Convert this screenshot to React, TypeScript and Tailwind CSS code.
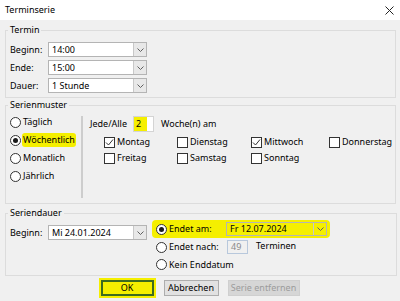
import React from "react";

const YELLOW = "bg-[#f5ef00]";

function Chevron() {
  return (
    <svg width="7" height="4" viewBox="0 0 7 4" fill="none">
      <path d="M0.5 0.5 L3.5 3.5 L6.5 0.5" stroke="#606060" strokeWidth="1" />
    </svg>
  );
}

function Combo({ value, w, yellow }: { value: string; w: string; yellow?: boolean }) {
  return (
    <div className={`flex h-full ${w} border border-[#b4b4b4] ${yellow ? YELLOW : "bg-white"}`}>
      <div className="flex-1 flex items-center pl-[3px] overflow-hidden whitespace-nowrap">{value}</div>
      <div className={`w-[13px] flex items-center justify-center border-l border-[#c8c8c8] ${yellow ? YELLOW : "bg-[#e8e8e8]"}`}>
        <Chevron />
      </div>
    </div>
  );
}

function Radio({ checked }: { checked?: boolean }) {
  return (
    <span className="w-[11px] h-[11px] rounded-full border border-[#333333] bg-white flex items-center justify-center shrink-0">
      {checked && <span className="w-[5px] h-[5px] rounded-full bg-[#1a1a1a]" />}
    </span>
  );
}

function Check({ label, checked }: { label: string; checked?: boolean }) {
  return (
    <div className="flex items-center gap-[2px]">
      <span className="w-[11px] h-[11px] border border-[#333333] bg-white flex items-center justify-center shrink-0">
        {checked && (
          <svg width="9" height="9" viewBox="0 0 9 9" fill="none">
            <path d="M1 4.5 L3.5 7 L8 1.5" stroke="#333333" strokeWidth="1" />
          </svg>
        )}
      </span>
      <span>{label}</span>
    </div>
  );
}

export default function App() {
  return (
    <div className="w-[400px] h-[301px] bg-[#f0f0f0] flex flex-col text-[9px] leading-[12px] text-black font-['Noto_Sans',sans-serif] overflow-hidden">
      {/* Title bar */}
      <div className="h-[20px] bg-white flex items-center justify-between pl-[5px] pr-[6px]">
        <span>Terminserie</span>
        <svg width="9" height="9" viewBox="0 0 9 9" fill="none">
          <path d="M0.5 0.5 L8.5 8.5 M8.5 0.5 L0.5 8.5" stroke="#222" strokeWidth="1" />
        </svg>
      </div>

      {/* Termin */}
      <fieldset className="mt-[4px] ml-[5px] mr-[4px] border border-[#dcdcdc] pl-[2px]">
        <legend className="px-[2px]">Termin</legend>
        <div className="flex flex-col gap-[3px] pt-[6px] pb-[4px] pl-[2px]">
          {[
            ["Beginn:", "14:00"],
            ["Ende:", "15:00"],
            ["Dauer:", "1 Stunde"],
          ].map(([l, v]) => (
            <div key={l} className="h-[15px] flex items-center">
              <span className="w-[38px]">{l}</span>
              <Combo value={v} w="w-[99px]" />
            </div>
          ))}
        </div>
      </fieldset>

      {/* Serienmuster */}
      <fieldset className="mt-[1px] ml-[5px] mr-[4px] border border-[#dcdcdc] pl-[2px]">
        <legend className="px-[2px]">Serienmuster</legend>
        <div className="h-[92px] flex">
          <div className="w-[73px] pt-[2px] pl-[2px] flex flex-col">
            {[
              ["Täglich", false],
              ["Wöchentlich", true],
              ["Monatlich", false],
              ["Jährlich", false],
            ].map(([l, c]) => (
              <div key={l as string} className="h-[18px] flex items-center gap-[1px]">
                <Radio checked={c as boolean} />
                <span className={c ? `${YELLOW} rounded-[3px] px-[1px] py-[1px]` : "px-[1px]"}>{l as string}</span>
              </div>
            ))}
          </div>
          <div className="w-[2px] my-[5px] bg-[#cdcdcd]" />
          <div className="flex-1 pl-[7px] flex flex-col">
            <div className="mt-[5px] h-[16px] flex items-center">
              <span className="w-[43px]">Jede/Alle</span>
              <div className="w-[21px] h-full flex bg-white border border-[#d4d4d4]">
                <span className={`w-[13px] ${YELLOW} flex items-center pl-[2px]`}>2</span>
              </div>
              <span className="ml-[7px]">Woche(n) am</span>
            </div>
            <div className="mt-[4px] ml-[14px] grid grid-cols-[73px_74px_78px_auto] gap-y-[4px]">
              <Check label="Montag" checked />
              <Check label="Dienstag" />
              <Check label="Mittwoch" checked />
              <Check label="Donnerstag" />
              <Check label="Freitag" />
              <Check label="Samstag" />
              <Check label="Sonntag" />
            </div>
          </div>
        </div>
      </fieldset>

      {/* Seriendauer */}
      <fieldset className="mt-[3px] ml-[5px] mr-[3px] border border-[#dcdcdc] pl-[2px]">
        <legend className="px-[2px]">Seriendauer</legend>
        <div className="h-[56px] flex">
          <div className="pl-[2px] mt-[6px] h-[15px] flex items-center">
            <span className="w-[38px]">Beginn:</span>
            <Combo value="Mi 24.01.2024" w="w-[99px]" />
          </div>
          <div className="ml-[5px] flex flex-col">
            <div className={`mt-[1px] h-[18px] w-[178px] ${YELLOW} rounded-[4px] flex items-center pl-[4px]`}>
              <Radio checked />
              <span className="ml-[2px] w-[57px]">Endet am:</span>
              <div className="h-[14px]">
                <Combo value="Fr 12.07.2024" w="w-[101px]" yellow />
              </div>
            </div>
            <div className="h-[18px] flex items-center pl-[4px]">
              <Radio />
              <span className="ml-[2px] w-[58px]">Endet nach:</span>
              <div className="w-[21px] h-[14px] border border-[#b8c8dc] bg-[#f0f0f0] text-[#8a8a8a] flex items-center pl-[3px]">49</div>
              <span className="ml-[8px] mb-[3px]">Terminen</span>
            </div>
            <div className="h-[17px] flex items-center pl-[4px]">
              <Radio />
              <span className="ml-[2px]">Kein Enddatum</span>
            </div>
          </div>
        </div>
      </fieldset>

      {/* Buttons */}
      <div className="mt-[4px] flex justify-center gap-[10px]">
        <div className={`w-[53px] h-[16px] ${YELLOW} border-2 border-[#3d6b1f] shadow-[0_0_0_2px_#f5ef00] flex items-center justify-center`}>OK</div>
        <div className="w-[55px] h-[16px] bg-[#e1e1e1] border border-[#adadad] flex items-center justify-center">Abbrechen</div>
        <div className="w-[72px] h-[16px] bg-[#d6d6d6] border border-[#cfcfcf] text-[#9c9c9c] flex items-center justify-center ml-[-1px]">Serie entfernen</div>
      </div>
    </div>
  );
}
